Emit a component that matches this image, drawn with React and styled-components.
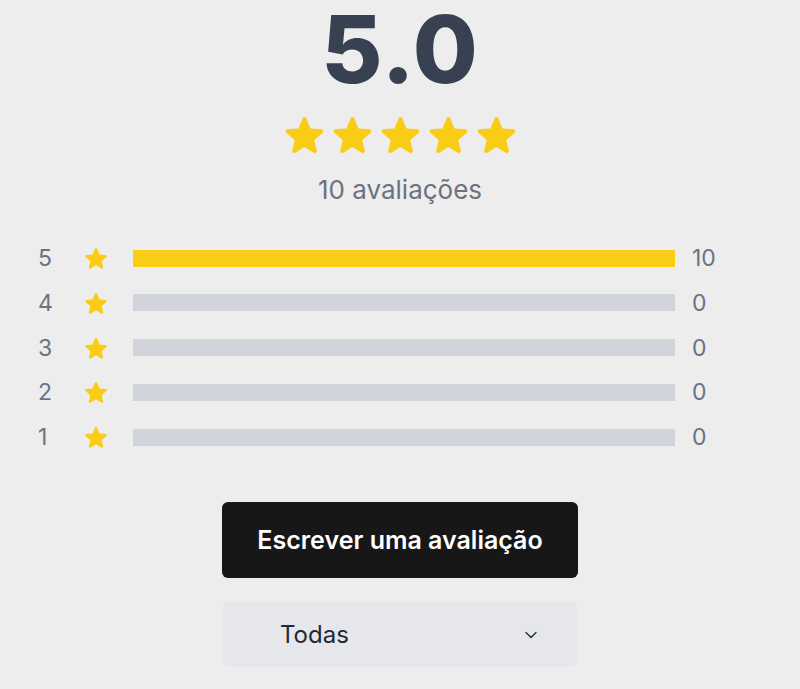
import React from "react";
import styled, { createGlobalStyle } from "styled-components";
import { ChevronDown } from "lucide-react";

const StyleGlobal = createGlobalStyle`
body{
  margin:0;
  background:#ededed;
  font-family:Inter, "Noto Sans", sans-serif;
}
`;

const Page = styled.div`
width:800px;
height:689px;
overflow:hidden;
display:flex;
flex-direction:column;
align-items:center;
`;
const Nota = styled.h1`
margin:2px 0 0;
font-size:94px;
line-height:1;
font-weight:800;
color:#374151;
letter-spacing:1px;
`;
const Estrelas = styled.div`
display:flex;
gap:3px;
margin-top:16px;
`;
const Total = styled.p`
margin:17px 0 0;
font-size:26px;
color:#6b7280;
`;
const Tabela = styled.div`
align-self:stretch;
display:flex;
flex-direction:column;
gap:27.75px;
padding:0 68px 0 38px;
margin-top:39px;
`;
const Linha = styled.div`
display:grid;
grid-template-columns:45px 50px 1fr 57px;
align-items:center;
height:17px;
`;
const Numero = styled.span`
font-size:23px;
color:#6b7280;
`;
const Barra = styled.div`
height:17px;
background:#d1d5db;
`;
const Preenchido = styled.div`
height:100%;
background:#facc15;
`;
const Contagem = styled.span`
padding-left:17px;
font-size:23px;
color:#6b7280;
`;
const BtnEscrever = styled.button`
margin-top:62px;
width:356px;
height:76px;
border:none;
border-radius:6px;
background:#171717;
color:#fff;
font-family:inherit;
font-size:25px;
font-weight:600;
cursor:pointer;
`;
const Filtro = styled.div`
margin-top:24px;
width:356px;
height:65px;
border-radius:7px;
background:#e5e7eb;
display:flex;
align-items:center;
justify-content:space-between;
padding:0 37px 0 58px;
box-sizing:border-box;
font-size:24px;
color:#1f2937;
`;

const Estrela = ({ size }) => (
  <svg width={size} height={size} viewBox="0 0 20 20" fill="#facc15">
    <path d="M10.868 2.884c-.321-.772-1.415-.772-1.736 0l-1.83 4.401-4.753.381c-.833.067-1.171 1.107-.536 1.651l3.62 3.102-1.106 4.637c-.194.813.691 1.456 1.405 1.02L10 15.591l4.069 2.485c.713.436 1.598-.207 1.404-1.02l-1.106-4.637 3.62-3.102c.635-.544.297-1.584-.536-1.65l-4.752-.382-1.831-4.401z" />
  </svg>
);

const dados = [
  { nota: 5, qtd: 10 },
  { nota: 4, qtd: 0 },
  { nota: 3, qtd: 0 },
  { nota: 2, qtd: 0 },
  { nota: 1, qtd: 0 },
];

const App = () => {
  const total = 10;
  return (
    <>
      <StyleGlobal />
      <Page>
        <Nota>5.0</Nota>
        <Estrelas>
          {[1, 2, 3, 4, 5].map((i) => (
            <Estrela key={i} size={45} />
          ))}
        </Estrelas>
        <Total>10 avaliações</Total>
        <Tabela>
          {dados.map((d) => (
            <Linha key={d.nota}>
              <Numero>{d.nota}</Numero>
              <Estrela size={26} />
              <Barra>
                <Preenchido style={{ width: `${(d.qtd / total) * 100}%` }} />
              </Barra>
              <Contagem>{d.qtd}</Contagem>
            </Linha>
          ))}
        </Tabela>
        <BtnEscrever>Escrever uma avaliação</BtnEscrever>
        <Filtro>
          <span>Todas</span>
          <ChevronDown size={20} strokeWidth={1.6} />
        </Filtro>
      </Page>
    </>
  );
};

export default App;
